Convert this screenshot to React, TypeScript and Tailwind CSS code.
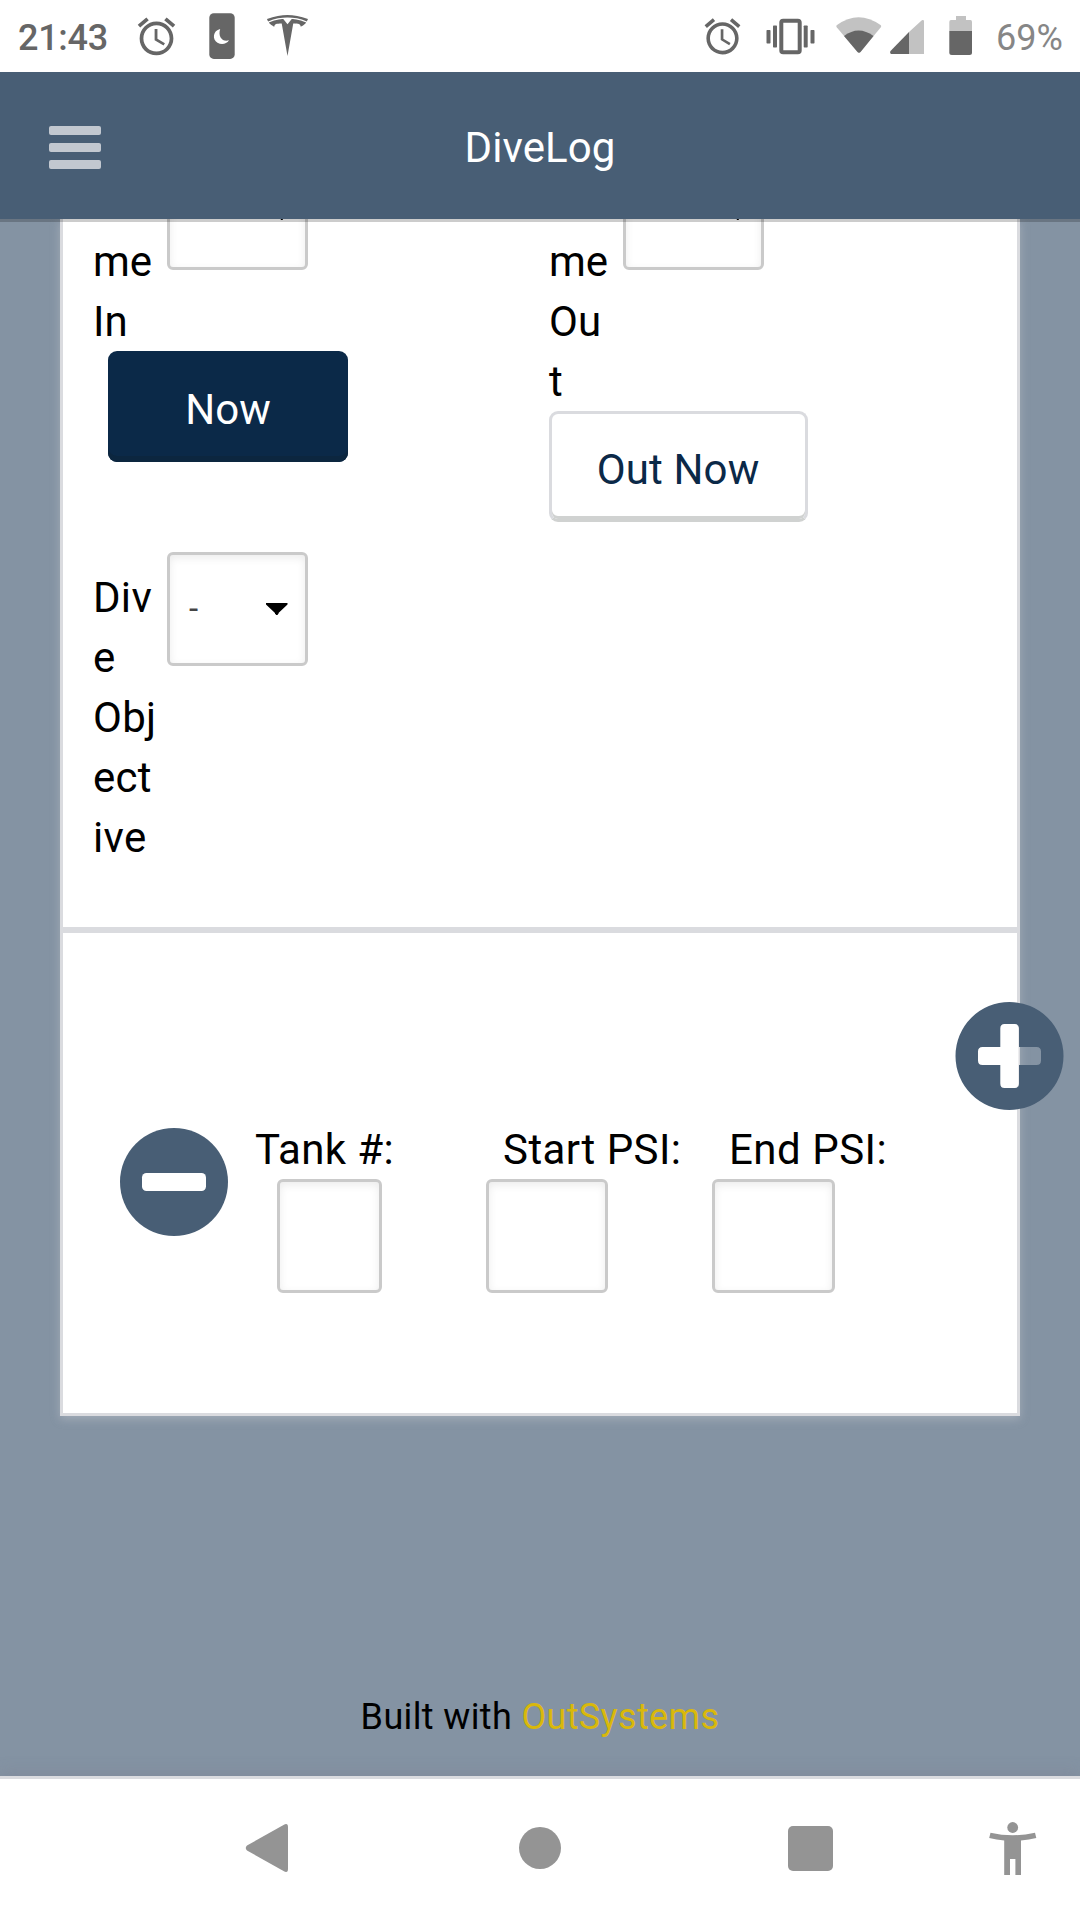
import type { ReactNode } from "react";
import { MdAlarm } from "react-icons/md";
import { SiTesla } from "react-icons/si";

function StatusBar() {
  return (
    <div className="flex h-[72px] shrink-0 items-start bg-white text-[36px] leading-[72px] text-[#666666]">
      <span className="ml-[18px] mt-[2px] w-[116px] font-medium tracking-[-0.3px]">21:43</span>
      <MdAlarm className="mt-[14px] h-[45px] w-[45px]" />
      <svg className="ml-[30px] mt-[13px]" width="26" height="46" viewBox="0 0 26 46">
        <rect x="0.3" y="0.3" width="25.4" height="45.6" rx="4.5" fill="#666666" />
        <path d="M11.2 16C3.8 17.5 3 26.500 8.500 29.800C12.500 32 17.500 31.200 20 27.300C14 29.500 8.500 24 11.200 16Z" fill="#ffffff" />
      </svg>
      <SiTesla className="ml-[32px] mt-[15px] h-[41px] w-[41px]" />
      <MdAlarm className="ml-[393px] mt-[15px] h-[43px] w-[43px]" />
      <svg className="ml-[22px] mt-[18px]" width="50" height="37" viewBox="0 0 50 37">
        <g fill="#666666">
          <rect x="0.500" y="12" width="4" height="13.500" rx="0.700" />
          <rect x="7" y="7.500" width="4" height="22" rx="0.700" />
          <rect x="37.700" y="7.500" width="4" height="22" rx="0.700" />
          <rect x="44.500" y="12" width="4" height="13.500" rx="0.700" />
        </g>
        <rect x="15.300" y="2.800" width="18.400" height="31.400" rx="1.800" fill="none" stroke="#666666" strokeWidth="4" />
      </svg>
      <svg className="ml-[20px] mt-[17px]" width="48" height="37" viewBox="0 0 48 37">
        <path d="M0.700 10.300Q-0.200 9 1 8.100Q22.500 -7.500 44.500 8.100Q45.700 9 44.800 10.300L24.500 35Q23 36.500 21.500 35Z" fill="#c2c2c2" />
        <path d="M8 19Q22.500 8 37.500 19L24.500 35Q23 36.500 21.500 35Z" fill="#666666" />
      </svg>
      <svg className="ml-[6px] mt-[20px]" width="36" height="34" viewBox="0 0 36 34">
        <path d="M19 34V12L31 1Q32.500 -0.500 34 0.500V34Z" fill="#c2c2c2" />
        <path d="M19 12V34H1Q-0.500 33 0.500 31Z" fill="#666666" />
      </svg>
      <svg className="ml-[23px] mt-[16px]" width="24" height="39" viewBox="0 0 24 39">
        <path d="M7 0H17V4H21.500Q23 4 23 6V15H0.300V6Q0.300 4 2 4H7Z" fill="#c2c2c2" />
        <path d="M0.300 15H23V36.500Q23 39 20.500 39H2.800Q0.300 39 0.300 36.500Z" fill="#666666" />
      </svg>
      <span className="ml-[23px] mt-[2px] text-[#868686]">69%</span>
    </div>
  );
}

function Header() {
  return (
    <header className="relative z-10 grid h-[147px] shrink-0 grid-cols-[1fr_auto_1fr] items-center bg-[#485e75] shadow-[0_3px_0_rgba(0,0,0,0.2)]">
      <button className="ml-[49px] mt-[3px] flex w-[52px] flex-col gap-2" aria-label="Menu">
        <span className="h-[9px] w-full rounded-[2px] bg-[#c2c8d0]" />
        <span className="h-[9px] w-full rounded-[2px] bg-[#c2c8d0]" />
        <span className="h-[9px] w-full rounded-[2px] bg-[#c2c8d0]" />
      </button>
      <h1 className="pt-[5px] text-[42px] leading-[60px] tracking-[0.1px] text-white">DiveLog</h1>
    </header>
  );
}

function Label({ lines, className }: { lines: string[]; className: string }) {
  return (
    <div className={`-mb-px w-[74px] ${className}`}>
      {lines.map((line) => (
        <span key={line} className="block whitespace-nowrap">
          {line}
        </span>
      ))}
    </div>
  );
}

function SelectBox({ children }: { children: ReactNode }) {
  return (
    <div className="flex h-[114px] w-[141px] rounded-[6px] border-3 border-[#cacaca] bg-white pl-[19px] text-[33px] leading-[108px] text-[#444444] shadow-[inset_0_3px_9px_rgba(0,0,0,0.08)]">
      {children}
    </div>
  );
}

function Arrow({ className }: { className: string }) {
  return (
    <svg className={className} width="22" height="12" viewBox="0 0 22 12">
      <path d="M0 0H21.500V1.500L12.500 10V11H11.800V12H9.800V11H9V10L0 1.500Z" fill="#000000" />
    </svg>
  );
}

function TextBox({ className }: { className: string }) {
  return (
    <input
      className={`block h-[114px] rounded-[6px] border-3 border-[#cacaca] bg-white shadow-[inset_0_3px_9px_rgba(0,0,0,0.08)] ${className}`}
    />
  );
}

function DiveTimes() {
  return (
    <section className="-mt-[63px] h-[771px] pl-[30px]">
      <div className="flex h-[396px]">
        <div className="w-[456px]">
          <div className="flex">
            <Label className="pt-[76px]" lines={["me", "In"]} />
            <SelectBox>
              <Arrow className="ml-[82px] mt-[49px]" />
            </SelectBox>
          </div>
          <button className="ml-[15px] block h-[111px] w-[240px] rounded-[9px] bg-[#0b2948] pt-[7px] text-white shadow-[inset_0_-6px_0_#0c263f]">
            Now
          </button>
        </div>
        <div>
          <div className="flex">
            <Label className="pt-[76px]" lines={["me", "Ou", "t"]} />
            <SelectBox>
              <Arrow className="ml-[82px] mt-[49px]" />
            </SelectBox>
          </div>
          <button className="block h-[111px] w-[259px] rounded-[9px] border-3 border-[#dadbdf] border-b-[#d0d2d1] bg-white pr-px pt-[7px] tracking-[0.15px] text-[#0b2948] shadow-[inset_0_-3px_0_#d0d2d1]">
            Out Now
          </button>
        </div>
      </div>
      <div className="flex">
        <Label className="pt-[16px] tracking-[0.3px]" lines={["Div", "e", "Obj", "ect", "ive"]} />
        <SelectBox>
          <span className="w-[77px]">-</span>
          <Arrow className="mt-[48px]" />
        </SelectBox>
      </div>
    </section>
  );
}

function Tanks() {
  return (
    <section className="flex h-[486px] border-t-6 border-[#dadbdf] pt-[186px]">
      <button className="ml-[57px] mt-[9px] h-[108px] w-[108px]" aria-label="Remove tank">
        <svg width="108" height="108" viewBox="0 0 108 108">
          <circle cx="54" cy="54" r="54" fill="#485e75" />
          <rect x="22" y="45" width="64" height="18" rx="4.500" fill="#ffffff" />
        </svg>
      </button>
      <div className="ml-[27px] w-[209px]">
        <div className="-mb-px whitespace-nowrap pt-px tracking-[0.35px]">Tank #:</div>
        <TextBox className="ml-[22px] w-[105px]" />
      </div>
      <div className="ml-[22px] w-[226px]">
        <div className="-mb-px whitespace-nowrap pl-[17px] pt-px tracking-[0.45px]">Start PSI:</div>
        <TextBox className="w-[122px]" />
      </div>
      <div>
        <div className="-mb-px whitespace-nowrap pl-[17px] pt-px tracking-[0.5px]">End PSI:</div>
        <TextBox className="w-[123px]" />
      </div>
    </section>
  );
}

function AddButton() {
  return (
    <button className="absolute left-[955px] top-[783px] h-[108px] w-[109px]" aria-label="Add tank">
      <svg width="109" height="108" viewBox="0 0 109 108">
        <path
          fill="#485e75"
          fillRule="evenodd"
          d="M54.500 0a54 54 0 0 1 0 108a54 54 0 0 1 0-108ZM49.500 22Q45.300 22 45.300 26.500V45H27.500Q23 45 23 49.500V58.500Q23 63 27.500 63H45.300V81.500Q45.300 86 49.500 86H59.500Q64 86 64 81.500V63H81.500Q86 63 86 58.500V49.500Q86 45 81.500 45H64V26.500Q64 22 59.500 22Z"
        />
        <path d="M60 22.500Q63.500 23 63.500 27V81Q63.500 85 60 85.500Z" fill="#ffffff" />
      </svg>
    </button>
  );
}

function NavBar() {
  return (
    <nav className="relative z-10 flex h-[144px] shrink-0 items-start border-t-3 border-[#dadbdf] bg-white text-[#949494] shadow-[0_-2px_15px_rgba(120,120,140,0.35)]">
      <svg className="ml-[245px] mt-[45px]" width="43" height="48" viewBox="0 0 43 48">
        <path d="M2 21.500L38.500 1Q43 -1.500 43 3V45Q43 49.500 38.500 47L2 26.500Q-0.500 24 2 21.500Z" fill="currentColor" />
      </svg>
      <span className="ml-[231px] mt-12 h-[42px] w-[42px] rounded-full bg-[#949494]" />
      <span className="ml-[227px] mt-[47px] h-[45px] w-[45px] rounded-[5px] bg-[#949494]" />
      <svg className="ml-[156px] mt-[43px]" width="48" height="53" viewBox="0 0 48 53">
        <circle cx="23.700" cy="5.500" r="5.400" fill="currentColor" />
        <path d="M1.500 10.700Q23.700 15.700 46 10.700L47.300 16Q40 17.800 32 18.500V53H26.400V37H21V53H15.200V18.500Q7.500 17.800 0.200 16Z" fill="currentColor" />
      </svg>
    </nav>
  );
}

export default function App() {
  return (
    <div className="flex h-[1920px] w-[1080px] flex-col overflow-hidden bg-[#8493a3] font-['Roboto',sans-serif] text-[42px] leading-[60px] text-black">
      <StatusBar />
      <Header />
      <main className="relative flex min-h-0 flex-1 flex-col">
        <div className="box-content h-[1197px] overflow-hidden px-[60px] pb-[24px]">
          <div className="flex h-[1197px] flex-col border-3 border-t-0 border-[#dadbdf] bg-white shadow-[0_3px_9px_rgba(218,219,223,0.35)]">
            <DiveTimes />
            <Tanks />
          </div>
        </div>
        <AddButton />
        <footer className="mt-[247px] text-center text-[36px] leading-[60px] tracking-[0.36px]">
          Built with <a className="text-[#d9b80b]">OutSystems</a>
        </footer>
      </main>
      <NavBar />
    </div>
  );
}
